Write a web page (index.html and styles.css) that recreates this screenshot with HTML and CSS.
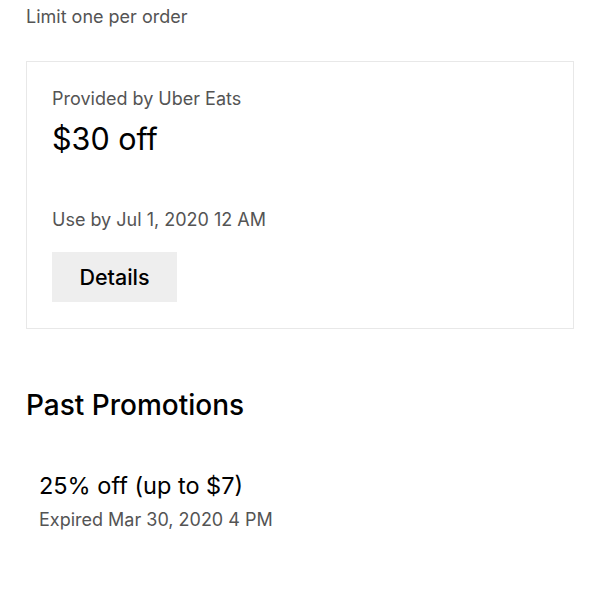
FILE: index.html
```html
<!DOCTYPE html>
<html>
<head>
    <meta charset='utf-8'>
    <title>Promotions</title>
    <meta name='viewport' content='width=device-width, initial-scale=1'>
    <link rel="stylesheet" href="styles.css">
</head>
<body>
    <div class="page">
        <p class="limit">Limit one per order</p>

        <div class="promo-card">
            <p class="provider">Provided by Uber Eats</p>
            <h1 class="amount">$30 off</h1>
            <p class="use-by">Use by Jul 1, 2020 12 AM</p>
            <button class="details-btn">Details</button>
        </div>

        <h2 class="section-title">Past Promotions</h2>

        <div class="past">
            <p class="past-name">25% off (up to $7)</p>
            <p class="past-date">Expired Mar 30, 2020 4 PM</p>
        </div>
    </div>
</body>
</html>
```

FILE: styles.css
```css
* {
    margin: 0;
    padding: 0;
    box-sizing: border-box;
    font-family: 'Inter', 'Noto Sans', sans-serif;
}

body {
    background: #fff;
    color: #000;
}

.page {
    padding: 5px 26px 0;
}

.limit {
    font-size: 18px;
    line-height: 24px;
    color: #545454;
}

.promo-card {
    margin-top: 32px;
    border: 1px solid #e8e8e8;
    padding: 25px 25px 25px;
    height: 268px;
}

.provider {
    font-size: 18px;
    line-height: 24px;
    color: #545454;
}

.amount {
    font-size: 30.5px;
    font-weight: 400;
    line-height: 38px;
    margin-top: 9px;
}

.use-by {
    font-size: 18px;
    line-height: 24px;
    color: #545454;
    margin-top: 50px;
}

.details-btn {
    margin-top: 20px;
    border: 0;
    outline: 0;
    background: #eeeeee;
    width: 125px;
    height: 50px;
    font-size: 21.5px;
    font-weight: 500;
    color: #000;
}

.section-title {
    font-size: 28px;
    font-weight: 500;
    line-height: 34px;
    margin-top: 59px;
}

.past {
    padding: 0 13px;
    margin-top: 49px;
}

.past-name {
    font-size: 23.5px;
    line-height: 30px;
}

.past-date {
    font-size: 18px;
    line-height: 24px;
    color: #545454;
    margin-top: 7px;
}
```
